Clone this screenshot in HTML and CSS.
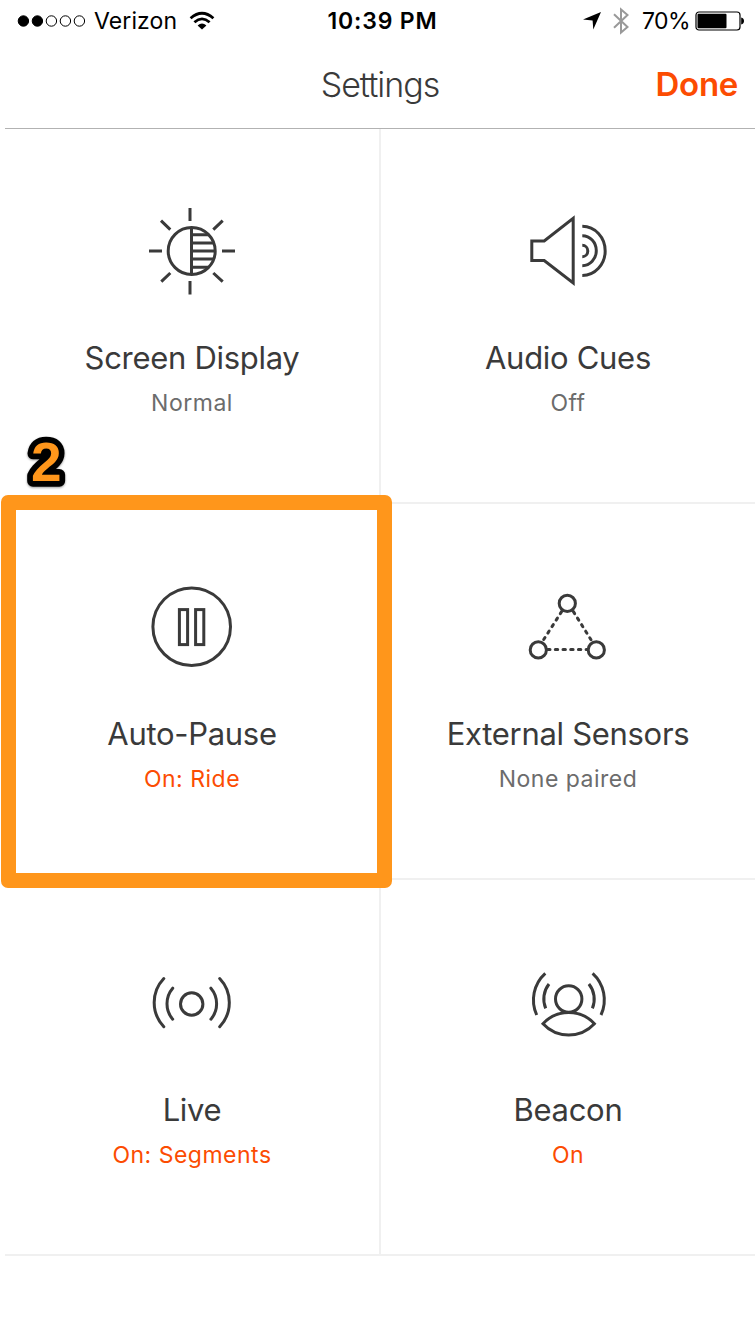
FILE: index.html
```html
<!DOCTYPE html>
<html lang="en">
<head>
  <meta charset="UTF-8">
  <meta name="viewport" content="width=device-width, initial-scale=1.0">
  <title>Settings</title>
  <link rel="stylesheet" href="styles.css">
</head>
<body>
  <!-- Status bar -->
  <div class="status-bar">
    <div class="status-left">
      <svg class="signal" width="70" height="14" viewBox="0 0 70 14">
        <circle cx="6.4" cy="7" r="5.2" fill="#000"/>
        <circle cx="20.4" cy="7" r="5.2" fill="#000"/>
        <circle cx="34.4" cy="7" r="5.2"/>
        <circle cx="48.4" cy="7" r="5.2"/>
        <circle cx="62.4" cy="7" r="5.2"/>
      </svg>
      <span class="carrier">Verizon</span>
      <svg class="wifi" width="26" height="20" viewBox="0 0 26 20">
        <path d="M1.6 7.2 Q13 -2.8 24.4 7.2" />
        <path d="M5.4 11.2 Q13 4.6 20.6 11.2" />
        <path class="solid" d="M8.6 14.4 Q13 10.6 17.4 14.4 L13 18.6 Z" />
      </svg>
    </div>
    <div class="time">10:39 PM</div>
    <div class="status-right">
      <svg class="location" width="20" height="20" viewBox="0 0 20 20">
        <path d="M19 1 L11.3 18.6 L10.6 9.4 L1 8.6 Z"/>
      </svg>
      <svg class="bluetooth" width="18" height="28" viewBox="0 0 18 28">
        <path d="M2 7.2 L15.5 20 L9 25.5 V2.5 L15.5 8 L2 20.8"/>
      </svg>
      <span class="percent">70%</span>
      <svg class="battery" width="50" height="20" viewBox="0 0 50 20">
        <rect class="case" x="1" y="1" width="44" height="18" rx="3"/>
        <rect x="2.5" y="2.8" width="29" height="14.4" rx="1"/>
        <path d="M46.2 6.6 Q49 7.2 49 10 T46.2 13.4 Z"/>
      </svg>
    </div>
  </div>

  <!-- Header Section -->
  <header>
    <h1>Settings</h1>
    <a href="#" class="done">Done</a>
  </header>

  <main class="grid">
    <div class="cell">
      <svg class="icon" viewBox="0 0 100 100">
        <circle cx="49.7" cy="50" r="23.5"/>
        <path d="M49.5 26V74M49.5 33.7H66M49.5 42H72M49.5 50H73M49.5 58H72M49.5 66.3H66"/>
        <path d="M48 7V20M48 80V93.5M7 50H20M80 50H93M19 19.7L28.3 28.7M80.7 19.7L71.3 28.7M19.3 80.7L28.3 72M80.7 80.7L71.3 72"/>
      </svg>
      <h2>Screen Display</h2>
      <p>Normal</p>
    </div>
    <div class="cell">
      <svg class="icon" viewBox="0 0 100 100">
        <path d="M13.8 40H26.2L55.2 17.3V82L26.2 59.5H13.8Z"/>
        <path d="M64.3 25.3A22.8 24.5 0 0 1 64.3 74.5M64.3 34.7A14 15 0 0 1 64.3 64.7M64.3 44.3A5.5 5.7 0 0 1 64.3 55.7"/>
      </svg>
      <h2>Audio Cues</h2>
      <p>Off</p>
    </div>
    <div class="cell">
      <svg class="icon" viewBox="0 0 100 100">
        <circle cx="49.7" cy="49.7" r="38.8"/>
        <rect x="37.4" y="32.6" width="8.2" height="35"/>
        <rect x="53.6" y="32.6" width="8.2" height="35"/>
      </svg>
      <h2>Auto-Pause</h2>
      <p class="on">On: Ride</p>
    </div>
    <div class="cell">
      <svg class="icon" viewBox="0 0 100 100">
        <circle cx="49.3" cy="26.4" r="8.1"/>
        <circle cx="20.3" cy="72.9" r="8.1"/>
        <circle cx="78.3" cy="72.9" r="8.1"/>
        <path class="dashed" d="M43.6 34.6L25.3 63.2M55.4 34.6L73.3 63.2M29.6 72.5H69.5"/>
      </svg>
      <h2>External Sensors</h2>
      <p>None paired</p>
    </div>
    <div class="cell">
      <svg class="icon round" viewBox="0 0 100 100">
        <circle cx="49.7" cy="51" r="11.2"/>
        <path d="M30.7 35.2A23.9 23.9 0 0 0 30.7 66.2M68.9 35.2A23.9 23.9 0 0 1 68.9 66.2"/>
        <path d="M21.8 25.5A35 35 0 0 0 21.8 73.7M77.7 25.5A35 35 0 0 1 77.7 73.7"/>
      </svg>
      <h2>Live</h2>
      <p class="on">On: Segments</p>
    </div>
    <div class="cell">
      <svg class="icon" viewBox="0 0 100 100">
        <circle cx="50.7" cy="46" r="13.2"/>
        <path d="M25 70.7A35 35 0 0 1 76.4 70.7A35 35 0 0 1 25 70.7Z"/>
        <path d="M27.3 20.3A36 36 0 0 0 18.7 62M31 31A24 24 0 0 0 27.7 55.3"/>
        <path d="M74.6 20.3A36 36 0 0 1 83 62M70.9 31A24 24 0 0 1 74.4 55.3"/>
      </svg>
      <h2>Beacon</h2>
      <p class="on">On</p>
    </div>
  </main>

  <!-- Step marker over the Auto-Pause cell -->
  <div class="highlight"></div>
  <svg class="step" width="60" height="64" viewBox="0 0 60 64">
    <text x="15" y="52">2</text>
  </svg>
</body>
</html>
```
FILE: styles.css
```css
* {
  box-sizing: border-box;
}
body {
  font-family: Inter, "Liberation Sans", sans-serif;
  position: relative;
  width: 755px;
  height: 1334px;
  margin: 0;
  background-color: #fff;
  color: #3a3a3a;
  overflow: hidden;
}
h1, h2, p {
  margin: 0;
}

/* Status bar */
.status-bar {
  display: grid;
  grid-template-columns: 310px 145px 300px;
  align-items: center;
  height: 41px;
  color: #000;
  font-size: 23px;
}
.status-left, .status-right {
  display: flex;
  align-items: center;
}
.status-left {
  padding-left: 17px;
}
.status-right {
  justify-content: flex-end;
  padding-right: 10px;
}
.signal {
  fill: none;
  stroke: #000;
  stroke-width: 1;
}
.carrier {
  margin-left: 7px;
  letter-spacing: 0.1px;
}
.wifi {
  margin-left: 12px;
  fill: none;
  stroke: #000;
  stroke-width: 2.8;
}
.wifi .solid {
  fill: #000;
  stroke: none;
}
.time {
  text-align: center;
  font-weight: 600;
  letter-spacing: 0.8px;
}
.bluetooth {
  margin: 0 12px 0 10px;
  fill: none;
  stroke: #999;
  stroke-width: 2;
}
.percent {
  letter-spacing: -0.6px;
}
.battery {
  margin-left: 5px;
}
.battery .case {
  fill: none;
  stroke: #000;
  stroke-width: 1.2;
}

/* Header styling */
header {
  display: grid;
  grid-template-columns: 1fr auto 1fr;
  align-items: center;
  height: 88px;
  margin-left: 5px;
  padding-right: 17px;
  padding-left: 17px;
  border-bottom: 1px solid #b2b2b2;
}
h1 {
  grid-column: 2;
  font-size: 34px;
  font-weight: 300;
  letter-spacing: -1px;
}
.done {
  justify-self: end;
  margin-bottom: 2px;
  color: #fc4c02;
  font-size: 33px;
  font-weight: 600;
  letter-spacing: -0.3px;
  text-decoration: none;
}

/* Settings grid */
.grid {
  display: grid;
  grid-template-columns: 376px 374px;
  grid-template-rows: 375px 376px 376px;
  margin-left: 5px;
}
.cell {
  display: flex;
  flex-direction: column;
  align-items: center;
  justify-content: flex-end;
  padding-bottom: 84px;
  border-bottom: 2px solid #f0f0f0;
}
.cell:nth-child(odd) {
  border-right: 2px solid #f0f0f0;
}
.icon {
  width: 100px;
  height: 100px;
  fill: none;
  stroke: #3a3a3a;
  stroke-width: 3;
}
.round {
  stroke-linecap: round;
}
.icon .dashed {
  stroke-linecap: round;
  stroke-dasharray: 2.4 5.3;
}
.cell h2 {
  margin-top: 37px;
  font-size: 31px;
  font-weight: 400;
  line-height: 40px;
  letter-spacing: -0.3px;
}
.cell p {
  margin-top: 10px;
  color: #6c6c6c;
  font-size: 23px;
  line-height: 30px;
  letter-spacing: 0.5px;
}
.cell .on {
  color: #fc4c02;
}

.highlight {
  position: absolute;
  top: 495px;
  left: 1px;
  width: 391px;
  height: 393px;
  border: 15px solid #ff961b;
  border-radius: 7px;
}
.step {
  position: absolute;
  top: 429px;
  left: 16px;
  fill: #ff961b;
  stroke: #000;
  stroke-width: 11.5;
  stroke-linejoin: round;
  paint-order: stroke;
  font-family: "Liberation Sans", sans-serif;
  font-size: 55px;
  font-weight: bold;
  filter: drop-shadow(0 1px 1px rgba(0, 0, 0, 0.4));
}
```
